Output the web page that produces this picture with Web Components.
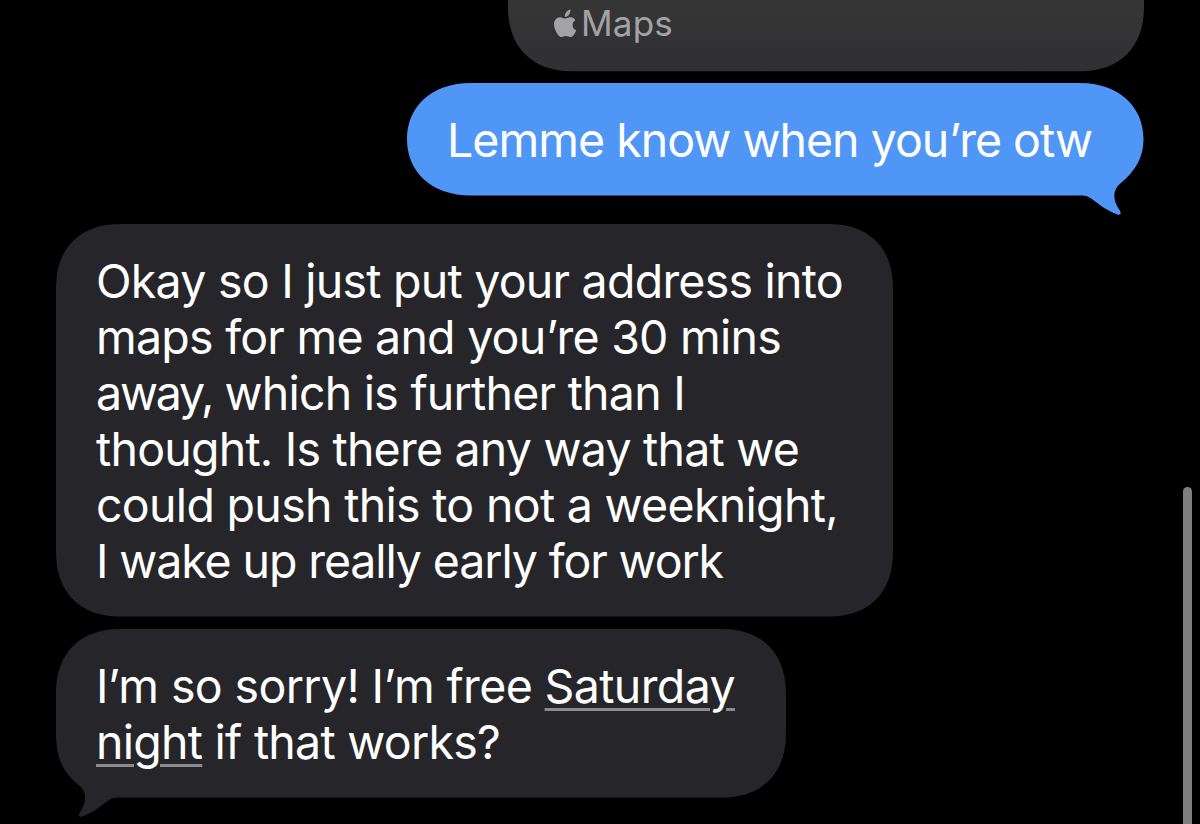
<!DOCTYPE html>
<html lang="en">
<head>
<meta charset="utf-8">
<title>Messages</title>
<style>
  body {
    margin: 0;
    background: #000;
    overflow: hidden;
  }
  .tight { letter-spacing: -2.2px; }
</style>
</head>
<body>
<chat-screen>
  <map-card>Maps</map-card>
  <chat-bubble side="right">
    <chat-line width="645">Lemme know when you’re otw</chat-line>
  </chat-bubble>
  <chat-bubble side="left" class="first">
    <chat-line width="747">Okay so I just put your address into</chat-line>
    <chat-line width="685">maps for me and you’re 30 mins</chat-line>
    <chat-line width="589"><span class="tight">away,</span> which is further than I</chat-line>
    <chat-line width="703">thought. Is there any way that we</chat-line>
    <chat-line width="742">could push this to not a weeknight,</chat-line>
    <chat-line width="627">I wake up really early for work</chat-line>
  </chat-bubble>
  <chat-bubble side="left" tail>
    <chat-line width="639">I’m so sorry! I’m free <date-link>Saturday</date-link></chat-line>
    <chat-line width="404"><date-link>night</date-link> if that works?</chat-line>
  </chat-bubble>
</chat-screen>

<script>
class ChatScreen extends HTMLElement {
  constructor() {
    super();
    this.attachShadow({ mode: "open" });
    this.shadowRoot.innerHTML = `
      <style>
        :host {
          display: flex;
          width: 1200px;
          height: 824px;
          overflow: hidden;
          background: #000;
          color: #fff;
          font-family: Inter, "Liberation Sans", sans-serif;
        }
        #thread {
          flex: 1;
          display: flex;
          flex-direction: column;
          gap: 12px;
          padding: 0 39px 0 56px;
        }
        #rail {
          width: 17px;
          display: flex;
          align-items: flex-end;
        }
        #thumb {
          width: 8.5px;
          height: 337px;
          border-radius: 5px 5px 0 0;
          background: #7f7f7f;
        }
        ::slotted(.first) { margin-top: 16.5px; }
      </style>
      <div id="thread"><slot></slot></div>
      <div id="rail"><div id="thumb"></div></div>
    `;
  }
}

class MapCard extends HTMLElement {
  constructor() {
    super();
    this.attachShadow({ mode: "open" });
    this.shadowRoot.innerHTML = `
      <style>
        :host {
          position: relative;
          box-sizing: border-box;
          align-self: flex-end;
          flex: none;
          display: flex;
          width: 636px;
          height: 71px;
          padding: 2px 45px 0;
          font-size: 35px;
          line-height: 42px;
          letter-spacing: 0.2px;
          color: #a3a3a5;
        }
        #shape {
          position: absolute;
          left: 0;
          top: 0;
        }
        #logo {
          position: relative;
          flex: none;
          margin: 7px 4px 0 0;
        }
        span { position: relative; }
      </style>
      <svg id="shape" width="636" height="72">
        <defs>
          <linearGradient id="g" x1="0" y1="0" x2="0" y2="1">
            <stop offset="0" stop-color="#363637"/>
            <stop offset="1" stop-color="#303032"/>
          </linearGradient>
        </defs>
        <path fill="url(#g)" d="M0 -1 L0 7 C0 47 24 71.3 64 71.3 L572 71.3 C612 71.3 636 47 636 7 L636 -1 Z"/>
      </svg>
      <svg id="logo" width="24" height="29" viewBox="0 0 24 29">
        <path fill="#a3a3a5" d="M17.4 0.6 C17.6 2.8 16.8 4.6 15.7 5.9 C14.6 7.2 13.2 7.9 11.8 7.8 C11.6 6 12.4 4.1 13.4 2.9 C14.5 1.6 16.1 0.7 17.4 0.6 Z"/>
        <path fill="#a3a3a5" d="M22.4 11.2 C20.6 12.2 19.5 13.9 19.6 16 C19.6 18.5 21 20.4 23.2 21.2 C22.7 22.7 22 24 21.2 25.2 C20.1 26.8 19 28.1 17.3 28.1 C15.6 28.1 15 27.1 12.9 27.1 C10.9 27.1 10.2 28.1 8.6 28.1 C6.9 28.1 5.7 26.6 4.5 24.9 C2.5 22 0.9 17.9 1 14.9 C1.2 10.9 4 8.3 7 8.2 C8.9 8.2 10.5 9.5 12 9.5 C13.4 9.5 15.4 8 17.9 8.2 C19.7 8.3 21.3 9.4 22.4 11.2 Z"/>
      </svg>
      <span><slot></slot></span>
    `;
  }
}

class ChatBubble extends HTMLElement {
  constructor() {
    super();
    this.attachShadow({ mode: "open" });
    this.shadowRoot.innerHTML = `
      <style>
        :host {
          --fill: #26262a;
          position: relative;
          flex: none;
          display: flex;
          flex-direction: column;
          align-self: flex-start;
          padding: 29px 50px 27.5px 40px;
          font-size: 46.5px;
          line-height: 56px;
        }
        :host([side="right"]) {
          --fill: #5096f7;
          align-self: flex-end;
          padding: 28.5px 51.5px 28px 40px;
          margin-right: 0.5px;
        }
        :host([tail]) { padding: 29px 51px 27.5px 40px; }
        svg {
          position: absolute;
          left: 0;
          top: 0;
          overflow: visible;
        }
        path { fill: var(--fill); }
        #text { position: relative; }
      </style>
      <svg width="100%" height="100%"><path/></svg>
      <div id="text"><slot></slot></div>
    `;
    this.path = this.shadowRoot.querySelector("path");
  }

  // Always drawn with the tail at bottom right, then flipped for incoming messages.
  draw() {
    const { width: w, height: h } = this.getBoundingClientRect();
    const right = this.getAttribute("side") === "right";
    const e = 64;
    const ey = Math.min(e, h / 2);
    const c = 24;
    const hasTail = right || this.hasAttribute("tail");
    let d = `M${e} 0 L${w - e} 0 C${w - c} 0 ${w} ${c} ${w} ${ey} L${w} ${h - ey}`;
    if (hasTail) {
      d += `C${w} ${h - 38} ${w - 8} ${h - 25} ${w - 22} ${h - 13}
        C${w - 31} ${h - 6} ${w - 31} ${h + 3} ${w - 25} ${h + 13}
        C${w - 22} ${h + 17} ${w - 22} ${h + 20} ${w - 26} ${h + 19}
        C${w - 38} ${h + 15} ${w - 46} ${h + 7} ${w - 54} ${h + 2}
        Q${w - 57} ${h} ${w - 61} ${h}`;
    } else {
      d += `C${w} ${h - c} ${w - c} ${h} ${w - e} ${h}`;
    }
    d += `L${e} ${h} C${c} ${h} 0 ${h - c} 0 ${h - ey} L0 ${ey} C0 ${c} ${c} 0 ${e} 0 Z`;
    this.path.setAttribute("d", d);
    if (!right) this.path.setAttribute("transform", `translate(${w} 0) scale(-1 1)`);
  }
}

// One line of a message, tracked so that it fills the given width.
class ChatLine extends HTMLElement {
  constructor() {
    super();
    this.attachShadow({ mode: "open" });
    this.shadowRoot.innerHTML = `
      <style>
        :host {
          display: block;
          white-space: nowrap;
        }
      </style>
      <span><slot></slot></span>
    `;
  }

  fit() {
    const target = Number(this.getAttribute("width"));
    const span = this.shadowRoot.querySelector("span");
    const tight = this.querySelector(".tight");
    const count = this.textContent.length - (tight ? tight.textContent.length : 0);
    this.style.width = target + "px";
    span.style.letterSpacing = "0.001px";
    const natural = span.getBoundingClientRect().width;
    span.style.letterSpacing = (target - natural) / count + "px";
  }
}

class DateLink extends HTMLElement {
  constructor() {
    super();
    this.attachShadow({ mode: "open" });
    this.shadowRoot.innerHTML = `<style>
        :host {
          display: inline;
          text-decoration: underline;
          text-decoration-color: #8b8b8e;
          text-decoration-thickness: 3px;
          text-underline-offset: 5px;
        }
      </style><slot></slot>`;
  }
}

customElements.define("chat-screen", ChatScreen);
customElements.define("map-card", MapCard);
customElements.define("date-link", DateLink);
customElements.define("chat-line", ChatLine);
customElements.define("chat-bubble", ChatBubble);

document.querySelectorAll("chat-line").forEach((line) => line.fit());
document.querySelectorAll("chat-bubble").forEach((bubble) => bubble.draw());
</script>
</body>
</html>
